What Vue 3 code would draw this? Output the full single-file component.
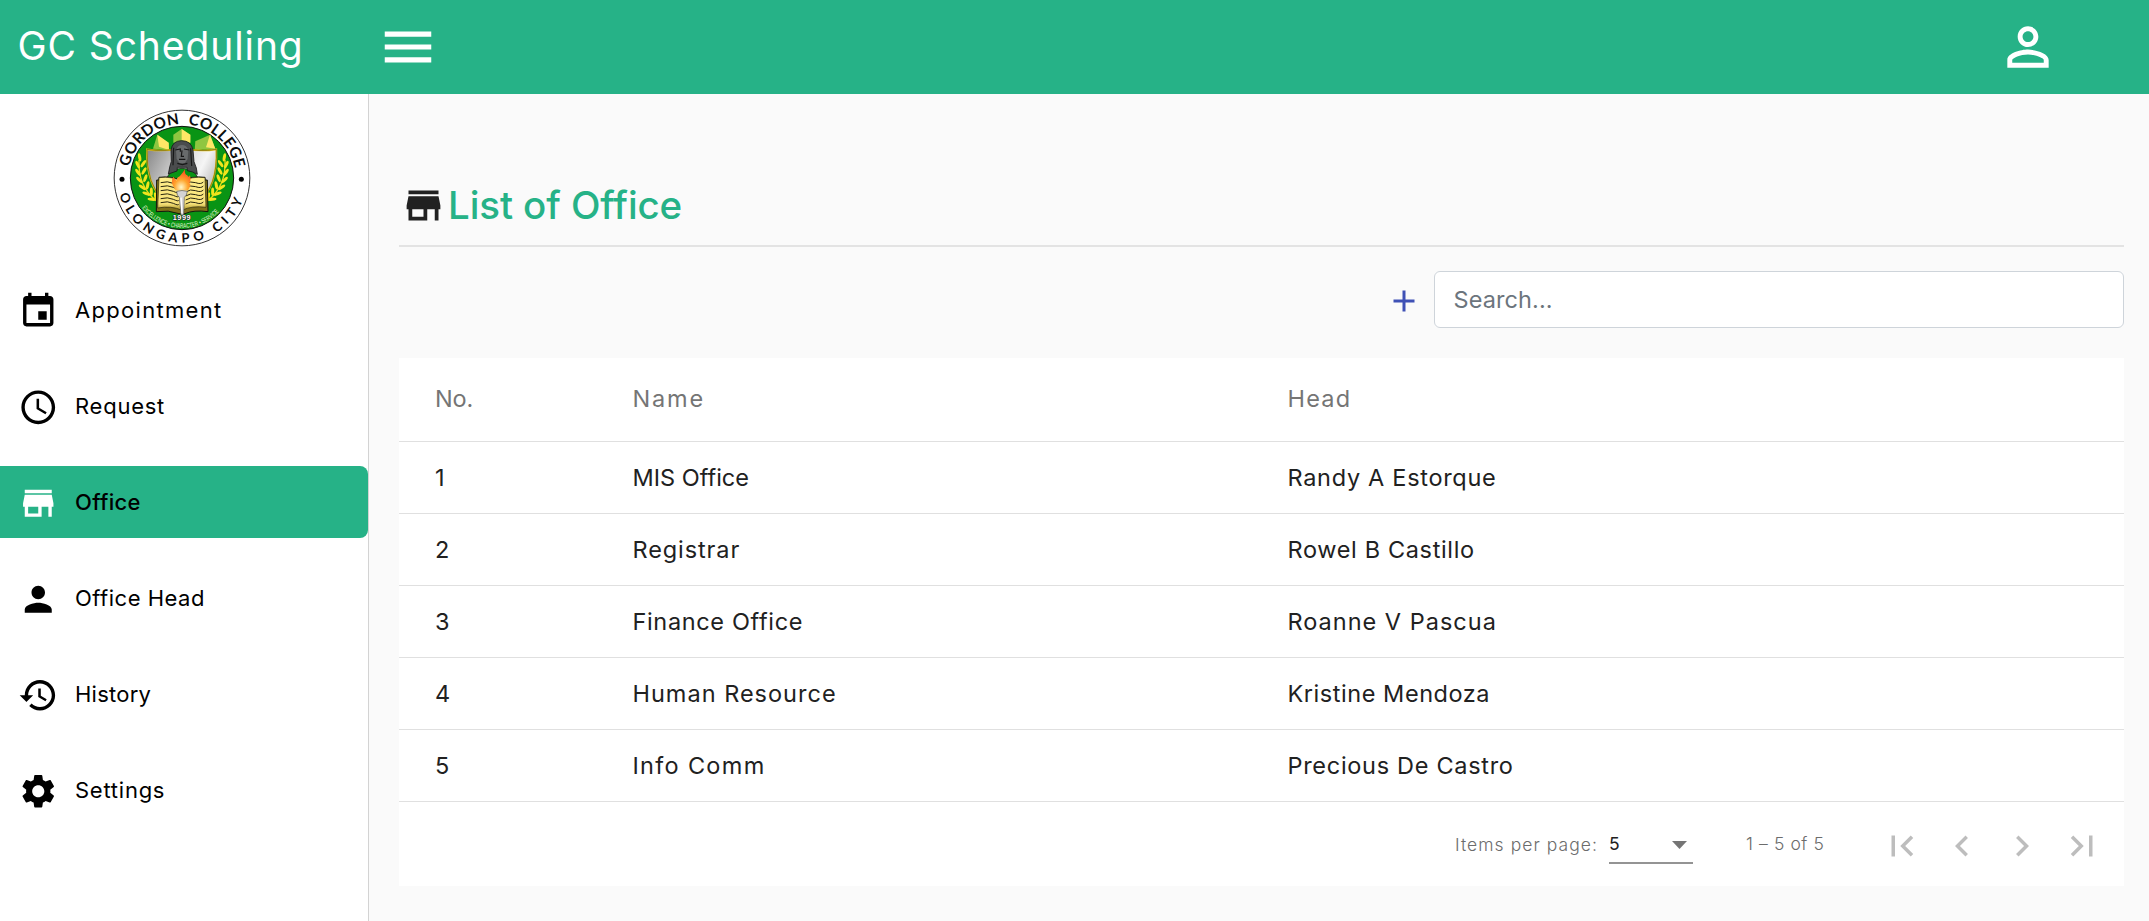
<script setup>
const icons = {
  menu: 'M3 18h18v-2H3v2zm0-5h18v-2H3v2zm0-7v2h18V6H3z',
  personOutline:
    'M12 5.9c1.16 0 2.1.94 2.1 2.1s-.94 2.1-2.1 2.1S9.9 9.16 9.9 8s.94-2.1 2.1-2.1m0 9c2.97 0 6.1 1.46 6.1 2.1v1.1H5.9V17c0-.64 3.13-2.1 6.1-2.1M12 4C9.79 4 8 5.79 8 8s1.79 4 4 4 4-1.79 4-4-1.79-4-4-4zm0 9c-2.67 0-8 1.34-8 4v3h16v-3c0-2.66-5.33-4-8-4z',
  event:
    'M17 12h-5v5h5v-5zM16 1v2H8V1H6v2H5c-1.11 0-1.99.9-1.99 2L3 19c0 1.1.89 2 2 2h14c1.1 0 2-.9 2-2V5c0-1.1-.9-2-2-2h-1V1h-2zm3 18H5V8h14v11z',
  schedule:
    'M11.99 2C6.47 2 2 6.48 2 12s4.47 10 9.99 10C17.52 22 22 17.52 22 12S17.52 2 11.99 2zM12 20c-4.42 0-8-3.58-8-8s3.58-8 8-8 8 3.58 8 8-3.58 8-8 8zm.5-13H11v6l5.25 3.15.75-1.23-4.5-2.67z',
  store:
    'M20 4H4v2h16V4zm1 10v-2l-1-5H4l-1 5v2h1v6h10v-6h4v6h2v-6h1zm-9 4H6v-4h6v4z',
  person:
    'M12 12c2.21 0 4-1.79 4-4s-1.79-4-4-4-4 1.79-4 4 1.79 4 4 4zm0 2c-2.67 0-8 1.34-8 4v2h16v-2c0-2.66-5.33-4-8-4z',
  history:
    'M13 3c-4.97 0-9 4.03-9 9H1l3.89 3.89.07.14L9 12H6c0-3.87 3.13-7 7-7s7 3.13 7 7-3.13 7-7 7c-1.93 0-3.68-.79-4.94-2.06l-1.42 1.42C8.27 19.99 10.51 21 13 21c4.97 0 9-4.03 9-9s-4.03-9-9-9zm-1 5v5l4.28 2.54.72-1.21-3.5-2.08V8H12z',
  settings:
    'M19.14 12.94c.04-.3.06-.61.06-.94 0-.32-.02-.64-.07-.94l2.03-1.58c.18-.14.23-.41.12-.61l-1.92-3.32c-.12-.22-.37-.29-.59-.22l-2.39.96c-.5-.38-1.03-.7-1.62-.94l-.36-2.54c-.04-.24-.24-.41-.48-.41h-3.84c-.24 0-.43.17-.47.41l-.36 2.54c-.59.24-1.13.57-1.62.94l-2.39-.96c-.22-.08-.47 0-.59.22L2.74 8.87c-.12.21-.08.47.12.61l2.03 1.58c-.05.3-.09.63-.09.94s.02.64.07.94l-2.03 1.58c-.18.14-.23.41-.12.61l1.92 3.32c.12.22.37.29.59.22l2.39-.96c.5.38 1.03.7 1.62.94l.36 2.54c.05.24.24.41.48.41h3.84c.24 0 .44-.17.47-.41l.36-2.54c.59-.24 1.13-.56 1.62-.94l2.39.96c.22.08.47 0 .59-.22l1.92-3.32c.12-.22.07-.47-.12-.61l-2.01-1.58zM12 15.6c-1.98 0-3.6-1.62-3.6-3.6s1.62-3.6 3.6-3.6 3.6 1.62 3.6 3.6-1.62 3.6-3.6 3.6z',
  add: 'M19 13h-6v6h-2v-6H5v-2h6V5h2v6h6v2z',
}

const menu = [
  { label: 'Appointment', tracking: 1.3, icon: icons.event },
  { label: 'Request', tracking: 0.75, icon: icons.schedule },
  { label: 'Office', tracking: 0.3, icon: icons.store, active: true },
  { label: 'Office Head', tracking: 0.5, icon: icons.person },
  { label: 'History', tracking: 0.25, icon: icons.history },
  { label: 'Settings', tracking: 0.75, icon: icons.settings },
]

// Each cell is a text and its letter spacing
const columns = [['No.', -0.2], ['Name', 1.8], ['Head', 1.2]]
const offices = [
  [['1', 0], ['MIS Office', 0], ['Randy A Estorque', 0.7]],
  [['2', 0], ['Registrar', 0.9], ['Rowel B Castillo', 0.65]],
  [['3', 0], ['Finance Office', 0.65], ['Roanne V Pascua', 1]],
  [['4', 0], ['Human Resource', 1], ['Kristine Mendoza', 0.55]],
  [['5', 0], ['Info Comm', 1.3], ['Precious De Castro', 0.7]],
]

const pageButtons = [
  { label: 'First page', icon: 'M18.41 16.59L13.82 12l4.59-4.59L17 6l-6 6 6 6zM6 6h2v12H6z' },
  { label: 'Previous page', icon: 'M15.41 7.41L14 6l-6 6 6 6 1.41-1.41L10.83 12z' },
  { label: 'Next page', icon: 'M10 6L8.59 7.41 13.17 12l-4.58 4.59L10 18l6-6z' },
  { label: 'Last page', icon: 'M5.59 7.41L10.18 12l-4.59 4.59L7 18l6-6-6-6zM16 6h2v12h-2z' },
]

const spaced = (px) => ({ letterSpacing: `${px}px` })

// Leaves of the right-hand laurel branch: [x, y, rotation]
const leaves = [
  [372, 172, 10], [361, 191, -35], [378, 194, 25], [359, 213, -30], [377, 217, 35],
  [355, 235, -20], [373, 240, 45], [348, 256, -12], [364, 262, 55], [337, 275, 0],
  [352, 281, 68], [324, 289, 12], [336, 298, 82],
]
const bookLines = [248, 260, 272, 284, 296, 308]
</script>

<template>
  <div class="app">
    <header class="topbar">
      <h1 class="brand">GC Scheduling</h1>
      <svg class="burger" viewBox="0 0 24 24"><path :d="icons.menu" /></svg>
      <svg class="user" viewBox="0 0 24 24"><path :d="icons.personOutline" /></svg>
    </header>

    <div class="body">
      <aside class="sidebar">
        <svg class="seal" viewBox="38 27 414 414">
          <defs>
            <path id="arc-top" d="M 83.6 234 A 161.4 161.4 0 0 1 406.4 234" />
            <path id="arc-bottom" d="M 51 234 A 194 194 0 0 0 439 234" />
            <path id="arc-motto" d="M 95 234 A 150 150 0 0 0 395 234" />
            <linearGradient id="steel" x1="0" y1="0" x2="1" y2="0.4">
              <stop offset="0" stop-color="#858585" />
              <stop offset="0.55" stop-color="#dcdcdc" />
              <stop offset="0.8" stop-color="#f5f5f5" />
              <stop offset="1" stop-color="#c9c9c9" />
            </linearGradient>
            <linearGradient id="page" x1="0" y1="0" x2="0" y2="1">
              <stop offset="0" stop-color="#ffee8a" />
              <stop offset="0.8" stop-color="#f7e27a" />
              <stop offset="1" stop-color="#a89222" />
            </linearGradient>
            <radialGradient id="fire" cx="0.5" cy="0.85" r="0.8">
              <stop offset="0" stop-color="#fff7c8" />
              <stop offset="0.45" stop-color="#ffa62e" />
              <stop offset="1" stop-color="#ff4a1c" />
            </radialGradient>
          </defs>
          <circle cx="245" cy="234" r="203.5" fill="#fff" stroke="#333" stroke-width="3" />
          <circle cx="245" cy="234" r="155" fill="#099414" stroke="#111" stroke-width="3" />
          <text class="ring" font-size="46" textLength="445">
            <textPath href="#arc-top" startOffset="33">GORDON&#160; COLLEGE</textPath>
          </text>
          <text class="ring" font-size="39" textLength="492">
            <textPath href="#arc-bottom" startOffset="50">OLONGAPO&#160;CITY</textPath>
          </text>
          <circle cx="65" cy="238" r="7.5" />
          <circle cx="423" cy="238" r="7.5" />

          <path d="M158 146 L171 104 L205 128 L206 150 Z" fill="#8fc640" />
          <path d="M171 104 L205 128 L206 150 L176 140 Z" fill="#ffe766" />
          <path d="M219 128 L219 104 L244 87 L270 104 L270 128 Z" fill="#8fc640" />
          <path d="M244 87 L270 104 L270 128 L244 120 Z" fill="#ffe766" />
          <path d="M283 150 L285 124 L329 104 L345 146 Z" fill="#8fc640" />
          <path d="M329 104 L345 146 L317 142 Z" fill="#ffe766" />
          <path
            d="M140 148 Q195 157 245 143 Q295 157 348 148 Q353 260 292 310 L196 310 Q136 255 140 148 Z"
            fill="url(#steel)" stroke="#e6c619" stroke-width="5"
          />
          <path
            d="M140 148 Q195 157 245 143 Q295 157 348 148 Q353 260 292 310 L196 310 Q136 255 140 148 Z"
            fill="none" stroke="#3d3a10" stroke-width="1.5"
          />
          <path d="M198 236 Q212 205 245 205 Q282 205 294 236 Z" fill="#099414" stroke="#111" stroke-width="2" />
          <path
            d="M212 150 Q216 123 243 122 Q273 122 278 150 L281 185 Q290 204 291 223 L277 216 L261 212 L260 202 L231 202 L230 213 L204 222 Q208 198 213 184 Z"
            fill="#4a4c4d" stroke="#191919" stroke-width="2.5"
          />
          <path d="M227 151 Q232 135 245 135 Q259 135 264 151 L262 177 L253 190 L238 190 L229 177 Z" fill="#686b6c" />
          <path d="M225 150 L240 147 L240 155 M251 147 L267 150 M245 151 L243 169 L251 169 M236 178 L255 178 M231 190 L246 194 L261 190 M220 143 L218 196 M271 145 L274 198" fill="none" stroke="#171717" stroke-width="3.5" />

          <g v-for="side in [1, -1]" :key="side" :transform="side === 1 ? '' : 'translate(490 0) scale(-1 1)'">
            <path d="M374 180 Q378 257 323 302" fill="none" stroke="#e9dc16" stroke-width="4" />
            <ellipse
              v-for="leaf in leaves" :key="leaf.join('-')"
              :cx="leaf[0]" :cy="leaf[1]" rx="4.6" ry="12.5" fill="#f2e51c"
              :transform="`rotate(${leaf[2]} ${leaf[0]} ${leaf[1]})`"
            />
          </g>

          <path d="M169 240 L176 240 L176 232 Q215 227 244 243 Q274 227 314 232 L314 240 L321 240 L323 335 Q280 329 254 341 L236 341 Q205 329 168 335 Z" fill="#80701a" stroke="#15150c" stroke-width="3" />
          <path d="M176 233 Q215 228 244 244 Q274 228 314 233 L317 322 Q275 316 245 331 Q213 316 172 324 Z" fill="url(#page)" stroke="#29260f" stroke-width="2" />
          <path
            v-for="y in bookLines" :key="y"
            :d="`M181 ${y} Q202 ${y - 6} 219 ${y + 2} T234 ${y + 4} M256 ${y + 4} Q270 ${y - 6} 286 ${y} T309 ${y - 2}`"
            fill="none" stroke="#29260f" stroke-width="3"
          />
          <path d="M226 271 Q207 244 219 230 Q225 240 229 242 Q229 232 238 229 Q245 222 254 208 Q252 225 261 226 Q264 234 269 226 Q273 243 267 250 Q275 252 263 271 Z" fill="url(#fire)" />
          <path d="M229 274 Q245 269 261 274 L258 285 L252 292 L250 345 L242 345 L237 292 L231 285 Z" fill="#d3d3d3" stroke="#555" stroke-width="2" />
          <path d="M242 293 L245 340" stroke="#fff" stroke-width="4" />
          <text class="year" x="217" y="359" font-size="22" textLength="54">1999</text>
          <text class="motto" font-size="20" textLength="264" lengthAdjust="spacingAndGlyphs">
            <textPath href="#arc-motto" startOffset="96">EXCELLENCE • CHARACTER • SERVICE</textPath>
          </text>
        </svg>

        <nav class="menu">
          <a v-for="item in menu" :key="item.label" class="item" :class="{ active: item.active }">
            <svg class="item-icon" viewBox="0 0 24 24"><path :d="item.icon" /></svg>
            <span :style="spaced(item.tracking)">{{ item.label }}</span>
          </a>
        </nav>
      </aside>

      <main class="content">
        <div class="heading">
          <svg class="heading-icon" viewBox="0 0 24 24"><path :d="icons.store" /></svg>
          <h2>List of Office</h2>
        </div>

        <div class="tools">
          <svg class="add" viewBox="0 0 24 24"><path :d="icons.add" /></svg>
          <input class="search" type="text" placeholder="Search..." />
        </div>

        <section class="card">
          <div class="row head">
            <span v-for="[text, tracking] in columns" :key="text" :style="spaced(tracking)">{{ text }}</span>
          </div>
          <div v-for="(office, i) in offices" :key="i" class="row">
            <span v-for="[text, tracking] in office" :key="text" :style="spaced(tracking)">{{ text }}</span>
          </div>
          <footer class="pager">
            <span class="pager-label">Items per page:</span>
            <div class="select">
              <span>5</span>
              <svg class="caret" viewBox="0 0 15 8"><path d="M0 0h15L7.500 8z" /></svg>
            </div>
            <span class="range">1 – 5 of 5</span>
            <div class="pages">
              <svg v-for="b in pageButtons" :key="b.label" viewBox="0 0 24 24" :aria-label="b.label">
                <path :d="b.icon" />
              </svg>
            </div>
          </footer>
        </section>
      </main>
    </div>
  </div>
</template>

<style>
body {
  margin: 0;
  background: #fafafa;
}
</style>

<style scoped>
* {
  box-sizing: border-box;
}
.app {
  height: 921px;
  display: flex;
  flex-direction: column;
  overflow: hidden;
  background: #fafafa;
  color: #212121;
  font-family: Inter, "Open Sans", sans-serif;
  font-weight: 400;
}
svg {
  display: block;
  flex: none;
  fill: currentColor;
}
.topbar {
  height: 94px;
  flex: none;
  display: flex;
  align-items: center;
  padding: 0 90px 0 17.500px;
  background: #26b287;
  color: #fff;
}
.brand {
  width: 360px;
  margin: 0 0 3px;
  font-size: 39px;
  font-weight: 400;
  line-height: 60px;
  letter-spacing: 0.9px;
  white-space: nowrap;
}
.burger,
.user {
  width: 62px;
  height: 62px;
}
.burger {
  margin-left: -0.500px;
}
.user {
  margin-left: auto;
}
.body {
  flex: 1;
  display: flex;
  min-height: 0;
}
.sidebar {
  width: 369px;
  flex: none;
  border-right: 1px solid #d3d3d3;
  background: #fff;
  color: #000;
}
.seal {
  width: 138px;
  height: 138px;
  margin: 15px 0 0 112.500px;
  fill: #000;
}
.ring {
  font-family: Lato, sans-serif;
  font-weight: 700;
  fill: #0c0c0c;
}
.year {
  font-family: "Liberation Sans", sans-serif;
  font-weight: 700;
  fill: #fff;
  stroke: #222;
  stroke-width: 3px;
  paint-order: stroke;
}
.motto {
  font-family: "Liberation Sans", sans-serif;
  font-weight: 400;
  fill: #e9f7d8;
}
.menu {
  display: flex;
  flex-direction: column;
  gap: 24px;
  margin-top: 27px;
}
.item {
  height: 72px;
  display: flex;
  align-items: center;
  padding-left: 18px;
  border-radius: 0 8px 8px 0;
  font-size: 22px;
}
.item-icon {
  width: 40.500px;
  height: 40.500px;
  margin: 2px 16.500px 0 0;
}
.item.active {
  background: #26b287;
  font-weight: 500;
}
.item.active .item-icon {
  color: #fff;
}
.content {
  flex: 1;
  padding: 78px 25px 0 30px;
}
.heading {
  height: 75px;
  display: flex;
  align-items: flex-start;
  padding-top: 11px;
  border-bottom: 2px solid #e3e3e3;
}
.heading-icon {
  width: 45px;
  height: 45px;
  margin-left: 1.500px;
}
.heading h2 {
  margin: -8px 0 0 2.500px;
  font-size: 38.500px;
  font-weight: 500;
  line-height: 60px;
  letter-spacing: -0.1px;
  color: #26b287;
}
.tools {
  display: flex;
  align-items: center;
  justify-content: flex-end;
  gap: 12px;
  margin-top: 24px;
}
.add {
  width: 36px;
  height: 36px;
  margin-top: 2px;
  color: #3f51b5;
}
.search {
  width: 690px;
  height: 57px;
  padding: 0 18.500px;
  border: 1px solid #ced4da;
  border-radius: 6px;
  background: #fff;
  font: inherit;
  font-size: 23.500px;
  letter-spacing: 0.1px;
  outline: none;
}
.search::placeholder {
  color: #6c757d;
  opacity: 1;
}
.card {
  height: 528px;
  margin-top: 30px;
  background: #fff;
}
.row {
  height: 72px;
  display: grid;
  grid-template-columns: 197.500px 655px 1fr;
  align-items: center;
  padding-left: 36px;
  border-bottom: 1px solid #e0e0e0;
  font-size: 23.500px;
}
.row.head {
  height: 84px;
  padding-bottom: 2px;
  color: #757575;
}
.pager {
  height: 84px;
  display: flex;
  align-items: center;
  justify-content: flex-end;
  padding-right: 21px;
  font-size: 17.500px;
  font-weight: 300;
  color: #6c6c6c;
}
.pager-label {
  width: 154px;
  letter-spacing: 1.05px;
  white-space: nowrap;
}
.select {
  width: 84px;
  height: 40px;
  display: flex;
  align-items: center;
  justify-content: space-between;
  padding-right: 6px;
  border-bottom: 2px solid #949494;
  font-weight: 400;
  color: #212121;
}
.caret {
  width: 15px;
  height: 8px;
  margin-top: 4px;
  color: #757575;
}
.range {
  width: 77px;
  margin: 0 58px 2px 53px;
  letter-spacing: 0.6px;
  white-space: nowrap;
}
.pages {
  display: flex;
  gap: 18px;
  margin-top: 4px;
  color: #bdbdbd;
}
.pages svg {
  width: 42px;
  height: 42px;
}
</style>
